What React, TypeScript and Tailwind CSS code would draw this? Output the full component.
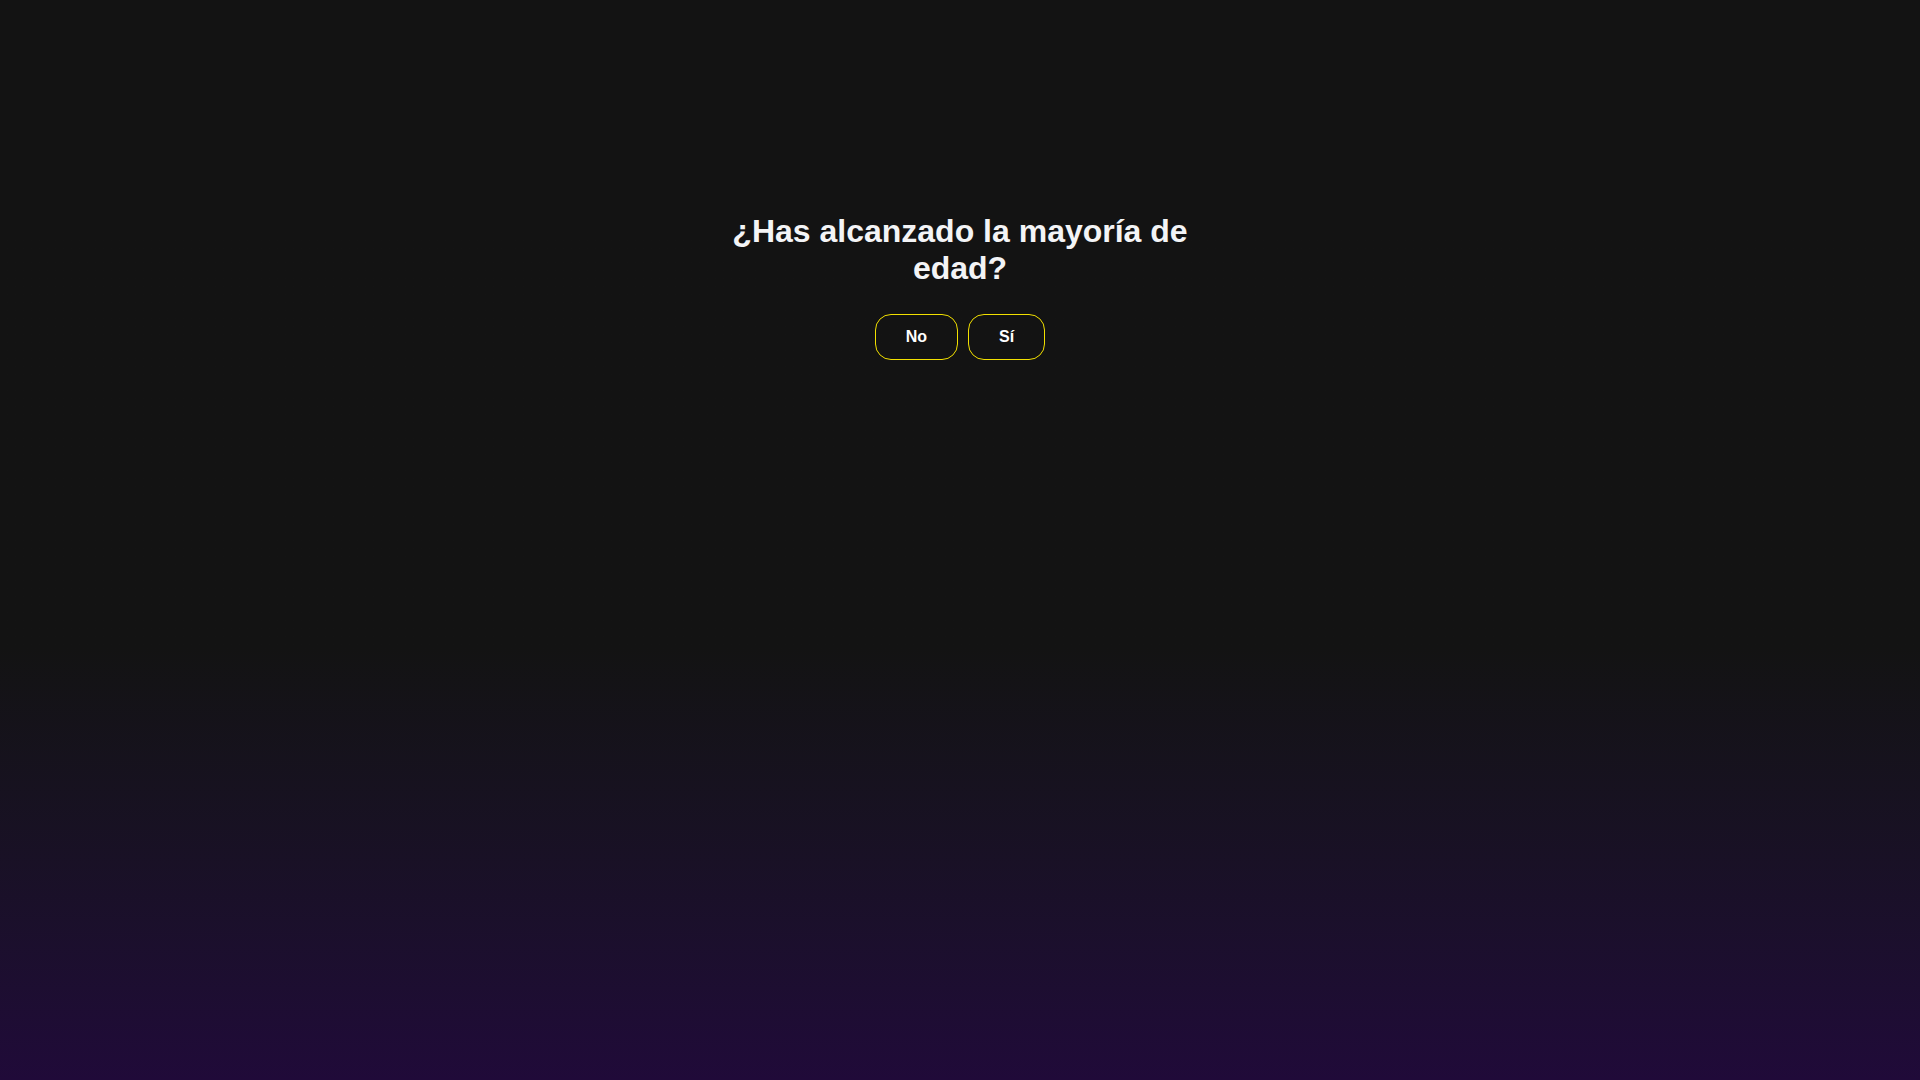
export default function App() {
  return (
    <div
      className="min-h-screen w-full bg-linear-to-b from-[#131313] from-60% to-[#200a39] flex flex-col items-center pt-[213px]"
      style={{ fontFamily: '"Liberation Sans", Arial, sans-serif' }}
    >
      <div className="max-w-lg px-4 text-center">
        <h1 className="text-[32px] leading-[1.15] font-bold text-gray-100">
          ¿Has alcanzado la mayoría de edad?
        </h1>
      </div>
      <div className="mt-[27px] flex gap-2.5">
        <button className="rounded-2xl border border-[#f2e000] bg-transparent px-[30px] py-2.5 text-base leading-6 font-bold text-white">
          No
        </button>
        <button className="rounded-2xl border border-[#f2e000] bg-transparent px-[30px] py-2.5 text-base leading-6 font-bold text-white">
          Sí
        </button>
      </div>
    </div>
  );
}
